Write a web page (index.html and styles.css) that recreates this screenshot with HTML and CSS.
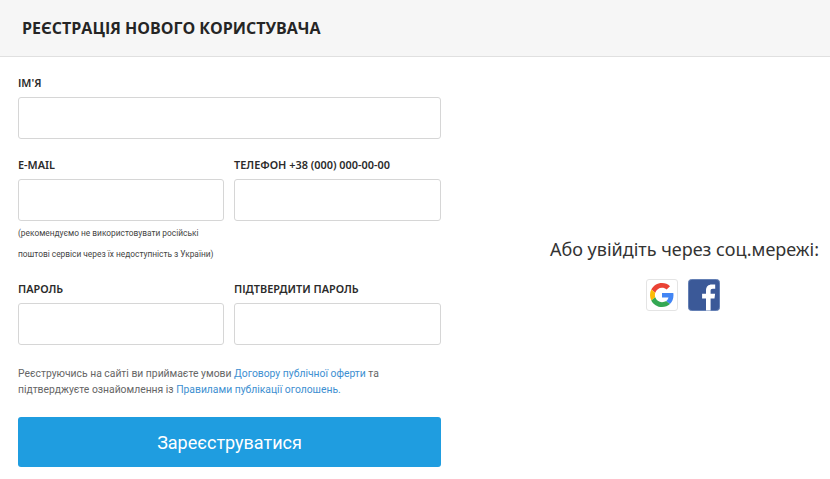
FILE: index.html
```html
<!DOCTYPE html>
<html lang="uk">
<head>
<meta charset="utf-8">
<title>Реєстрація</title>
<link rel="stylesheet" href="styles.css">
</head>
<body>
<header class="head"><h1>РЕЄСТРАЦІЯ НОВОГО КОРИСТУВАЧА</h1></header>
<main class="content">
  <form class="form">
    <div class="field name-field">
      <label class="label">ІМ'Я</label>
      <input class="input" type="text">
    </div>
    <div class="row email-row">
      <div class="field">
        <label class="label">E-MAIL</label>
        <input class="input" type="text">
        <p class="hint">(рекомендуємо не використовувати російські</p>
        <p class="hint">поштові сервіси через їх недоступність з України)</p>
      </div>
      <div class="field">
        <label class="label">ТЕЛЕФОН +38 (000) 000-00-00</label>
        <input class="input" type="text">
      </div>
    </div>
    <div class="row pass-row">
      <div class="field">
        <label class="label">ПАРОЛЬ</label>
        <input class="input" type="password">
      </div>
      <div class="field">
        <label class="label">ПІДТВЕРДИТИ ПАРОЛЬ</label>
        <input class="input" type="password">
      </div>
    </div>
    <p class="terms">Реєструючись на сайті ви приймаєте умови <a href="#">Договору публічної оферти</a> та<br>підтверджуєте ознайомлення із <a href="#">Правилами публікації оголошень.</a></p>
    <button class="submit" type="button">Зареєструватися</button>
  </form>
  <aside class="social">
    <p class="social-title">Або увійдіть через соц.мережі:</p>
    <div class="social-icons">
      <a class="icon google" href="#" aria-label="Google">
        <svg width="24" height="24" viewBox="0 0 48 48">
          <path fill="#EA4335" d="M24 9.5c3.54 0 6.71 1.22 9.21 3.6l6.85-6.85C35.9 2.38 30.47 0 24 0 14.62 0 6.51 5.38 2.56 13.22l7.98 6.19C12.43 13.72 17.74 9.5 24 9.5z"/>
          <path fill="#4285F4" d="M46.98 24.55c0-1.57-.15-3.09-.38-4.55H24v9.02h12.94c-.58 2.96-2.26 5.48-4.78 7.18l7.73 6c4.51-4.18 7.09-10.36 7.09-17.65z"/>
          <path fill="#FBBC05" d="M10.53 28.59c-.48-1.45-.76-2.99-.76-4.59s.27-3.14.76-4.59l-7.98-6.19C.92 16.46 0 20.12 0 24c0 3.88.92 7.54 2.56 10.78l7.97-6.19z"/>
          <path fill="#34A853" d="M24 48c6.48 0 11.93-2.13 15.89-5.81l-7.73-6c-2.15 1.45-4.92 2.3-8.16 2.3-6.26 0-11.57-4.22-13.47-9.91l-7.98 6.19C6.51 42.62 14.62 48 24 48z"/>
        </svg>
      </a>
      <a class="icon facebook" href="#" aria-label="Facebook">
        <svg width="32" height="32" viewBox="0 0 32 32">
          <rect x="0.5" y="0.5" width="31" height="31" rx="3" fill="#3b5998" stroke="#6480b5"/>
          <path fill="#fff" d="M22.600 31.500V19.400h3.900l.6-4.600h-4.500v-2.900c0-1.300.4-2.200 2.300-2.200h2.300V5.600c-.4-.1-1.800-.2-3.400-.2-3.400 0-5.800 2.100-5.800 5.900v3.500h-3.900v4.600h3.900v12.100z"/>
        </svg>
      </a>
    </div>
  </aside>
</main>
</body>
</html>
```
FILE: styles.css
```css
* { box-sizing: border-box; }
html, body { margin: 0; padding: 0; }
body {
  background: #fff;
  color: #222;
  font-family: "Open Sans", "Noto Sans", sans-serif;
  width: 830px;
  height: 479px;
  overflow: hidden;
}
.head {
  height: 57px;
  background: #f6f6f6;
  border-bottom: 1px solid #e0e0e0;
  padding-left: 22px;
  display: flex;
  align-items: center;
}
.head h1 {
  margin: 0;
  font-size: 16px;
  font-weight: 700;
  letter-spacing: 0;
  color: #252525;
  line-height: 22px;
}
.content {
  display: flex;
  padding-left: 18px;
}
.form {
  width: 423px;
  flex: none;
  padding-top: 19px;
}
.field { display: flex; flex-direction: column; min-width: 0; }
.row {
  display: grid;
  grid-template-columns: 206px 207px;
  column-gap: 10px;
}
.name-field { margin-bottom: 19px; }
.email-row { height: 124px; }
.label {
  font-size: 10.900px;
  font-weight: 600;
  line-height: 14px;
  height: 14px;
  margin-bottom: 7px;
  color: #2b2b2b;
  font-family: "Noto Sans", sans-serif;
}
.input {
  height: 42px;
  width: 100%;
  border: 1px solid #d6d6d6;
  border-radius: 3px;
  background: #fff;
  padding: 0 10px;
  margin: 0;
}
.hint {
  margin: 0;
  font-size: 8.350px;
  line-height: 21px;
  color: #444;
  white-space: nowrap;
  font-family: "Roboto", sans-serif;
}
.hint:first-of-type { margin-top: 2px; }
.terms {
  margin: 21px 0 0;
  font-size: 10.350px;
  line-height: 16px;
  color: #666;
  font-family: "Roboto", sans-serif;
  white-space: nowrap;
}
.terms a { color: #3d8fd1; text-decoration: none; }
.submit {
  display: block;
  width: 423px;
  height: 50px;
  margin-top: 19px;
  background: #1f9de0;
  border: 0;
  border-radius: 3px;
  color: #fff;
  font-family: "Roboto", sans-serif;
  font-size: 18px;
  padding: 0;
}
.social {
  flex: 1;
  padding-top: 180px;
  display: flex;
  flex-direction: column;
  align-items: center;
  padding-left: 98px;
}
.social-title {
  margin: 0;
  font-size: 18px;
  line-height: 24px;
  color: #333;
  white-space: nowrap;
  font-family: "Noto Sans", sans-serif;
}
.social-icons {
  display: flex;
  align-items: center;
  gap: 10px;
  margin-top: 18px;
  margin-right: 3px;
}
.icon { display: flex; }
.icon.google {
  width: 32px;
  height: 32px;
  border: 1px solid #e4e4e4;
  border-radius: 3px;
  align-items: center;
  justify-content: center;
}
.icon svg { display: block; }
```
